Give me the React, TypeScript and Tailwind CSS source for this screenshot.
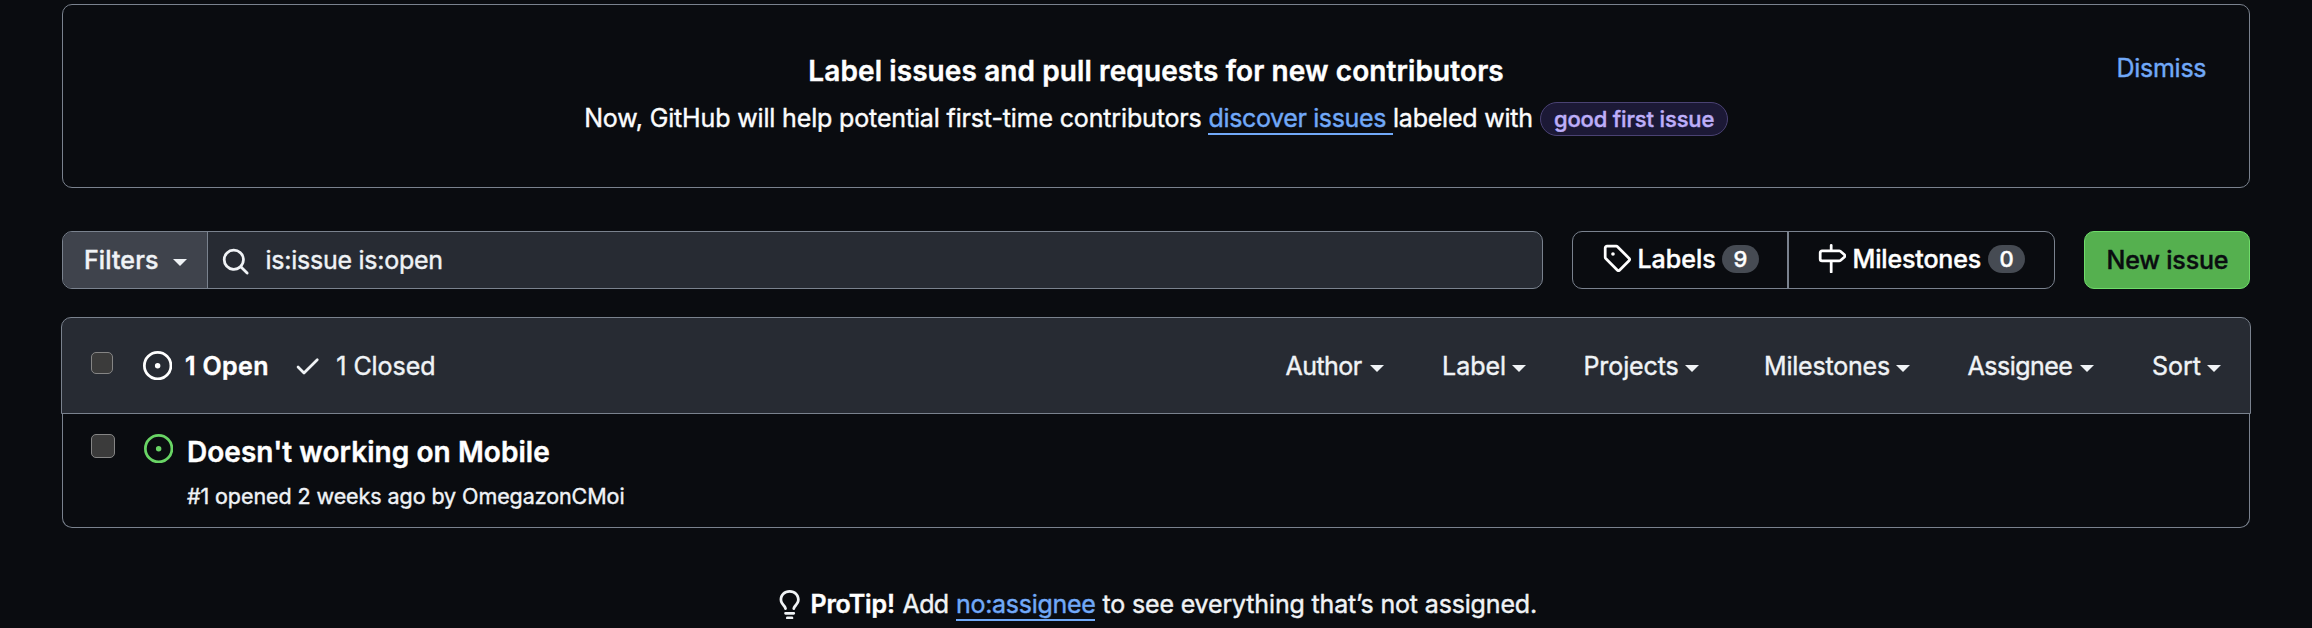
import React from "react";

const PATHS = {
  issue: "M8 9.5a1.5 1.5 0 1 0 0-3 1.5 1.5 0 0 0 0 3ZM8 0a8 8 0 1 1 0 16A8 8 0 0 1 8 0ZM1.5 8a6.5 6.5 0 1 0 13 0 6.5 6.5 0 0 0-13 0Z",
  search:
    "M10.68 11.74a6 6 0 0 1-7.922-8.982 6 6 0 0 1 8.982 7.922l3.04 3.04a.749.749 0 0 1-.326 1.275.749.749 0 0 1-.734-.215ZM11.5 7a4.499 4.499 0 1 0-8.997 0A4.499 4.499 0 0 0 11.5 7Z",
  check:
    "M13.78 4.22a.75.75 0 0 1 0 1.06l-7.25 7.25a.75.75 0 0 1-1.06 0L2.22 9.28a.751.751 0 0 1 .018-1.042.751.751 0 0 1 1.042-.018L6 10.94l6.72-6.72a.75.75 0 0 1 1.06 0Z",
  tag: "M1 7.775V2.75C1 1.784 1.784 1 2.75 1h5.025c.464 0 .91.184 1.238.513l6.25 6.25a1.75 1.75 0 0 1 0 2.474l-5.026 5.026a1.75 1.75 0 0 1-2.474 0l-6.25-6.25A1.752 1.752 0 0 1 1 7.775Zm1.5 0c0 .066.026.13.073.177l6.25 6.25a.25.25 0 0 0 .354 0l5.025-5.025a.25.25 0 0 0 0-.354l-6.25-6.25a.25.25 0 0 0-.177-.073H2.75a.25.25 0 0 0-.25.25ZM6 5a1 1 0 1 1 0 2 1 1 0 0 1 0-2Z",
  milestone:
    "M7.75 0a.75.75 0 0 1 .75.75V3h3.634c.414 0 .814.147 1.13.414l2.07 1.75a1.75 1.75 0 0 1 0 2.672l-2.07 1.75a1.75 1.75 0 0 1-1.13.414H8.5v5.25a.75.75 0 0 1-1.5 0V10H2.75A1.75 1.75 0 0 1 1 8.25v-3.5C1 3.784 1.784 3 2.75 3H7V.75A.75.75 0 0 1 7.75 0Zm4.384 8.5a.25.25 0 0 0 .161-.06l2.07-1.75a.248.248 0 0 0 0-.38l-2.07-1.75a.25.25 0 0 0-.161-.06H2.75a.25.25 0 0 0-.25.25v3.5c0 .138.112.25.25.25h9.384Z",
  bulb: "M8 1.5c-2.363 0-4 1.69-4 3.75 0 .984.424 1.625.984 2.304l.214.253c.223.264.47.556.673.848.284.411.537.896.621 1.49a.75.75 0 0 1-1.484.211c-.04-.282-.163-.547-.37-.847a8.456 8.456 0 0 0-.542-.68c-.084-.1-.173-.205-.268-.32C3.201 7.75 2.5 6.766 2.5 5.25 2.5 2.31 4.863 0 8 0s5.5 2.31 5.5 5.25c0 1.516-.701 2.5-1.328 3.259-.095.115-.184.22-.268.319-.207.245-.383.453-.541.681-.208.3-.33.565-.37.847a.751.751 0 0 1-1.485-.212c.084-.593.337-1.078.621-1.489.203-.292.45-.584.673-.848.075-.088.147-.173.213-.253.561-.679.985-1.32.985-2.304 0-2.06-1.637-3.75-4-3.75ZM5.75 12h4.5a.75.75 0 0 1 0 1.5h-4.5a.75.75 0 0 1 0-1.5ZM6 15.25a.75.75 0 0 1 .75-.75h2.5a.75.75 0 0 1 0 1.5h-2.5a.75.75 0 0 1-.75-.75Z",
};

function Icon({ name, className = "" }: { name: keyof typeof PATHS; className?: string }) {
  return (
    <svg viewBox="0 0 16 16" fill="currentColor" className={`size-[29.3px] shrink-0 ${className}`}>
      <path d={PATHS[name]} />
    </svg>
  );
}

function Caret({ className = "" }: { className?: string }) {
  return (
    <svg viewBox="0 0 14 7" fill="currentColor" className={`h-[7px] w-[14px] shrink-0 ${className}`}>
      <path d="M0 0h14L7 7Z" />
    </svg>
  );
}

function Counter({ value }: { value: number }) {
  return (
    <span className="flex h-7 w-[37px] shrink-0 items-center justify-center rounded-full bg-[#464b53] text-[22px] font-medium">
      {value}
    </span>
  );
}

const MENUS = [
  { label: "Author", className: "w-[98.5px] tracking-[-0.55px]" },
  { label: "Label", className: "ml-[58px] w-[84px]" },
  { label: "Projects", className: "ml-[57.5px] w-[115.5px] tracking-[-0.1px]" },
  { label: "Milestones", className: "ml-[65px] w-[146px] tracking-[-0.2px]" },
  { label: "Assignee", className: "ml-[57.5px] w-[126.5px] tracking-[-0.5px]" },
  { label: "Sort", className: "ml-[58px] w-[69px]" },
];

export default function App() {
  return (
    <div className="flex h-[628px] w-[2312px] flex-col overflow-hidden whitespace-nowrap bg-[#0a0c10] px-[61px] pt-1 font-[Inter,'Liberation_Sans',sans-serif] text-[25px] leading-[38px] text-[#f0f3f6] [-webkit-text-stroke:0.4px_currentColor]">
      <section className="mx-px flex h-[184px] shrink-0 justify-between rounded-[10px] border border-[#7a828e] pt-[44px]">
        <div className="flex flex-col">
          <h2 className="mt-px pl-[745.3px] text-[28px] font-semibold leading-[42px] tracking-[0.1px] text-white">
            Label issues and pull requests for new contributors
          </h2>
          <div className="mt-[7px] flex items-start pl-[521.2px] text-[#fbfcfd]">
            <span className="w-[624.3px] tracking-[-0.15px]">Now, GitHub will help potential first-time contributors</span>
            <a className="h-9 w-[184.5px] border-b-2 border-[#71a9f8] tracking-[-0.36px] text-[#71a9f8]">discover issues</a>
            <span className="w-[147px] tracking-[-0.22px]">labeled with</span>
            <span className="mt-[3px] flex h-[34px] w-[188px] items-center rounded-full border border-[#4a4273] bg-[#1c1936] pl-[13px] text-[22px] font-medium tracking-[-0.16px] text-[#bdaef9]">
              good first issue
            </span>
          </div>
        </div>
        <a className="w-[132.6px] tracking-[-0.25px] text-[#71a9f8]">Dismiss</a>
      </section>

      <div className="mx-px mt-[43px] flex h-[58px] shrink-0">
        <div className="flex w-[1481px] overflow-hidden rounded-[10px] border border-[#7a828e] bg-[#272b33]">
          <button className="flex w-[145px] items-center border-r border-[#7a828e] bg-[#3f434c] pl-[21px] font-medium tracking-[0.1px]">
            <span className="w-[88.5px] text-left">Filters</span>
            <Caret className="mt-[4px]" />
          </button>
          <div className="flex flex-1 items-center pl-[13.3px]">
            <Icon name="search" className="mt-[3px]" />
            <span className="ml-[14.9px] tracking-[-0.25px]">is:issue is:open</span>
          </div>
        </div>
        <div className="ml-[29px] flex w-[483px] rounded-[10px] border border-[#7a828e] font-medium text-white">
          <a className="flex w-[215px] items-center border-r border-[#7a828e] pb-0.5 pl-[28.7px]">
            <Icon name="tag" className="mt-[-2.5px]" />
            <span className="ml-[6.5px] w-[84.5px]">Labels</span>
            <Counter value={9} />
          </a>
          <a className="flex flex-1 items-center border-l border-[#7a828e] pb-0.5 pl-[27.7px]">
            <Icon name="milestone" className="mt-[-1px]" />
            <span className="ml-[6.5px] w-[135.5px] tracking-[-0.15px]">Milestones</span>
            <Counter value={0} />
          </a>
        </div>
        <button className="ml-[29px] flex w-[166px] items-center rounded-[10px] border border-[#6fdd6a] bg-[#55b04f] pl-[21.5px] font-medium tracking-[-0.2px] text-[#0a0c10]">
          New issue
        </button>
      </div>

      <section className="mt-7 flex shrink-0 flex-col">
        <header className="flex h-[97px] items-center rounded-t-[10px] border border-[#7a828e] bg-[#272b33] pl-[29px] pr-[29px]">
          <span className="mt-[-5px] size-[22px] rounded-[5px] border-[1.5px] border-[#858585] bg-[#3b3b3b]" />
          <Icon name="issue" className="ml-[29.7px] text-white" />
          <span className="ml-[13px] w-[108.5px] font-semibold tracking-[0.35px] text-white">1 Open</span>
          <Icon name="check" />
          <span className="ml-[13.5px] tracking-[-0.05px]">1 Closed</span>
          <nav className="ml-auto flex">
            {MENUS.map((m) => (
              <a key={m.label} className={`flex items-center justify-between ${m.className}`}>
                {m.label}
                <Caret className="mt-[6px]" />
              </a>
            ))}
          </nav>
        </header>
        <article className="mx-px flex h-[114px] items-start rounded-b-[10px] border border-t-0 border-[#7a828e] pl-7">
          <span className="mt-5 size-6 rounded-[5px] border-[1.5px] border-[#858585] bg-[#3b3b3b]" />
          <Icon name="issue" className="ml-[29px] mt-[19.5px] text-[#69d565]" />
          <div className="ml-[13.6px] flex flex-col pt-[17px]">
            <h3 className="text-[28px] font-semibold leading-[42px] tracking-[0.06px] text-white">Doesn't working on Mobile</h3>
            <p className="mt-[7px] text-[21.5px] leading-8 tracking-[-0.08px]">#1 opened 2 weeks ago by OmegazonCMoi</p>
          </div>
        </article>
      </section>

      <footer className="mt-[57px] flex shrink-0 items-start pl-[714.3px]">
        <Icon name="bulb" className="mt-[5px]" />
        <strong className="ml-[5.8px] w-[92.1px] font-semibold tracking-[-0.14px] text-white">ProTip!</strong>
        <span className="w-[53.5px] tracking-[-0.6px]">Add</span>
        <a className="h-9 w-[139px] border-b-2 border-[#71a9f8] tracking-[-0.29px] text-[#71a9f8]">no:assignee</a>
        <span className="ml-[7.5px] tracking-[-0.16px]">to see everything that’s not assigned.</span>
      </footer>
    </div>
  );
}
